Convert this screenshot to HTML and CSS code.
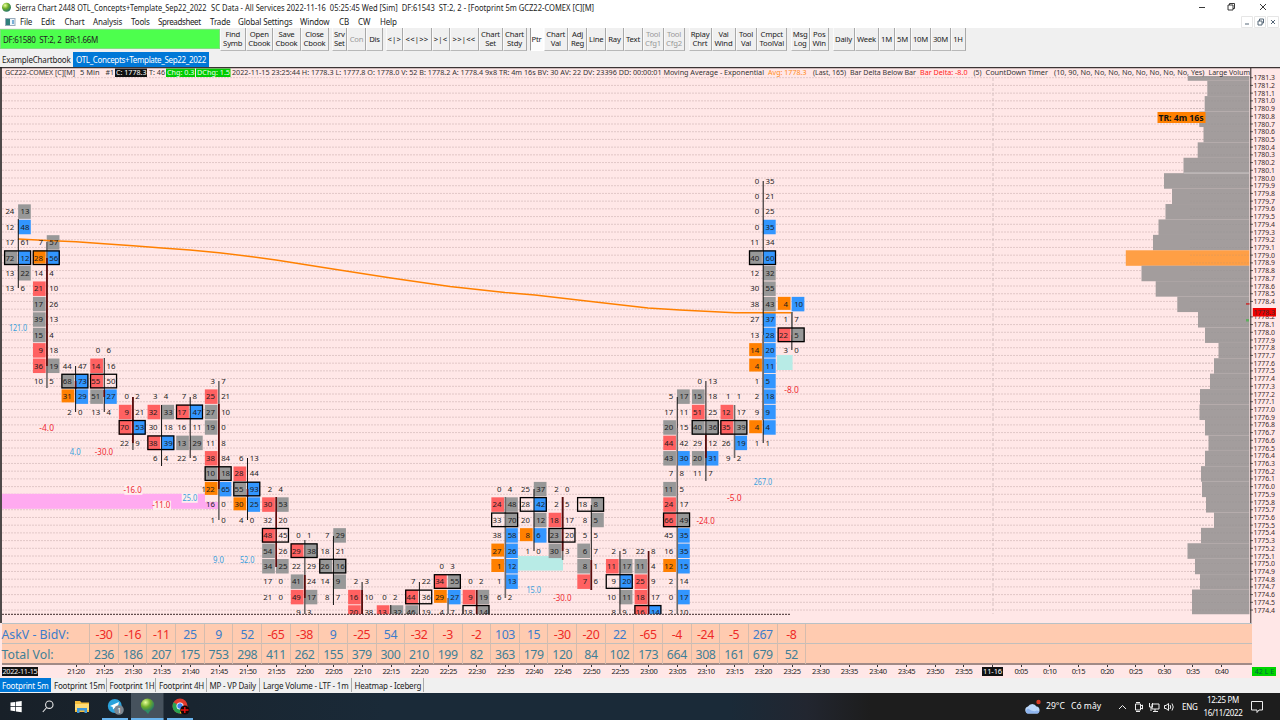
FILE: index.html
```html
<!DOCTYPE html>
<html lang="en">
<head>
<meta charset="utf-8">
<title>Sierra Chart</title>
<link rel="stylesheet" href="styles.css">
</head>
<body>
<div class="app">
  <header class="titlebar">
    <svg class="title-svg" width="620" height="15">
      <defs><radialGradient id="ball" cx=".35" cy=".3" r=".8"><stop offset="0" stop-color="#eaff9a"/><stop offset=".45" stop-color="#6fae2a"/><stop offset="1" stop-color="#176a72"/></radialGradient></defs>
      <circle cx="6.5" cy="7.2" r="4.5" fill="url(#ball)"/>
      <text x="15.500" y="10.500" textLength="191" lengthAdjust="spacingAndGlyphs">Sierra Chart 2448 OTL_Concepts+Template_Sep22_2022</text>
      <text x="211" y="10.500" textLength="383" lengthAdjust="spacingAndGlyphs">SC Data - All Services 2022-11-16&#160; 05:25:45 Wed [Sim]&#160; DF:61543&#160; ST:2, 2 - [Footprint 5m GCZ22-COMEX [C][M]</text>
    </svg>
    <svg class="winctl" width="80" height="15" fill="none" stroke="#222" stroke-width=".9"><path d="M5 7.500h6M34 5h5v5h-5zM35.500 5V3.500h5V8.500h-1.500M66 4l6 6M72 4l-6 6"/></svg>
  </header>
  <nav class="menubar">
    <svg class="menu-ico" width="11" height="8"><rect x=".5" y=".5" width="9.500" height="7" fill="#eef6fb" stroke="#9ab"/><rect x="1" y="1" width="4" height="6" fill="#2f7f7c"/><rect x="7" y="2" width="2" height="4" fill="#7ab0d8"/></svg>
    <span>File</span><span>Edit</span><span>Chart</span><span>Analysis</span><span>Tools</span><span class="tight">Spreadsheet</span><span>Trade</span><span>Global Settings</span><span>Window</span><span>CB</span><span>CW</span><span>Help</span>
    <svg class="mdictl" width="38" height="12" fill="none" stroke="#567" stroke-width="1"><path d="M.5.500h11v11H.500zM13.500.500h11v11h-11zM26.500.500h11v11h-11z" stroke="#e6e6e6"/><path d="M4 8h4M17 5h4v4h-4zM18.500 5V3h4v4h-1.500M30 4l4 4M34 4l-4 4"/></svg>
  </nav>
  <div class="toolbar">
    <div class="status">DF:61580&#160; ST:2, 2&#160; BR:1.66M</div>
    <div class="tb">Find<br>Symb</div><div class="tb">Open<br>Cbook</div><div class="tb">Save<br>Cbook</div><div class="tb">Close<br>Cbook</div><i></i>
    <div class="tb">Srv<br>Set</div><div class="tb off">Con</div><div class="tb">Dis</div><i></i>
    <div class="tb sym">&lt;|&gt;</div><div class="tb sym">&lt;&lt;|&gt;&gt;</div><div class="tb sym">&gt;|&lt;</div><div class="tb sym">&gt;&gt;|&lt;&lt;</div><div class="tb">Chart<br>Set</div><div class="tb">Chart<br>Stdy</div><i></i>
    <div class="tb on">Ptr</div><div class="tb">Chart<br>Val</div><div class="tb">Adj<br>Reg</div><div class="tb">Line</div><div class="tb">Ray</div><div class="tb">Text</div><div class="tb off">Tool<br>Cfg1</div><div class="tb off">Tool<br>Cfg2</div><i></i>
    <div class="tb">Rplay<br>Chrt</div><div class="tb">Val<br>Wind</div><div class="tb">Tool<br>Val</div><div class="tb">Cmpct<br>ToolVal</div><i></i>
    <div class="tb">Msg<br>Log</div><div class="tb">Pos<br>Win</div><i></i>
    <div class="tb">Daily</div><div class="tb">Week</div><div class="tb">1M</div><div class="tb">5M</div><div class="tb">10M</div><div class="tb">30M</div><div class="tb">1H</div>
  </div>
  <div class="books"><span class="book">ExampleChartbook</span><span class="book active">OTL_Concepts+Template_Sep22_2022</span></div>
  <main class="chart">
    <svg id="plot" class="plot" width="1280" height="556" viewBox="0 67 1280 556"></svg>
    <div class="stats">
      <div class="stat-row" id="delta"><span class="stat-label askv">AskV - BidV:</span></div>
      <div class="stat-row" id="total"><span class="stat-label vol">Total Vol:</span></div>
    </div>
    <div class="times" id="times"><span class="date-first">2022-11-15</span></div>
  </main>
  <div class="tabs"><span class="tab active">Footprint 5m</span><span class="tab">Footprint 15m</span><span class="tab">Footprint 1H</span><span class="tab">Footprint 4H</span><span class="tab">MP - VP Daily</span><span class="tab">Large Volume - LTF - 1m</span><span class="tab">Heatmap - Iceberg</span></div>
  <footer class="taskbar">
    <svg class="apps" width="200" height="27" viewBox="0 0 200 27">
      <rect x="131" width="32.500" height="27" fill="#46525d"/>
      <path d="M10.500 9.600l4.800-.7v4.300h-4.800zM16 8.800l5.700-.8v5.200H16zM10.500 14h4.800v4.300l-4.800-.7zM16 14h5.700v5.200l-5.700-.8z" fill="#fff"/>
      <g fill="none" stroke="#e8e8e8" stroke-width="1.100"><circle cx="49.300" cy="11.700" r="3.700"/><path d="M46.700 14.500L42.800 19"/></g>
      <path d="M75 8h5l1.500 1.500H89V19H75z" fill="#f4bd3c"/><path d="M75 11h14v6H75z" fill="#ffdc75"/><path d="M77 20v-5h10v5h-2.500v-2.500h-5V20z" fill="#3c98dc"/>
      <circle cx="114.800" cy="13" r="7" fill="#2ba3dc"/><path d="M110 13l9-4-2 8-2.500-2-1.500 1.500-.3-2.500z" fill="#fff"/><circle cx="119" cy="17" r="4.800" fill="#7c8790"/><text x="117.300" y="19.500" class="badge">1</text>
      <ellipse cx="147.500" cy="12" rx="6.700" ry="6.500" fill="url(#ball)"/><path d="M144.500 17h6l-2.500 4z" fill="#2f8c66"/>
      <circle cx="180" cy="13" r="7.500" fill="#e33b2e"/><path d="M180 13L173.500 9.300A7.500 7.500 0 0 0 180 20.500z" fill="#29a352"/><path d="M180 13h7.500a7.500 7.500 0 0 1-7.500 7.500z" fill="#fbc116"/><circle cx="180" cy="13" r="3.500" fill="#fff"/><circle cx="180" cy="13" r="2.700" fill="#3d80ee"/><circle cx="184.800" cy="17" r="4.600" fill="#160507"/><path d="M181 17h7.500M184.800 14v6" stroke="#e11" stroke-width="1.400"/>
      <path d="M102 26h26M131 26h32.500M167 26h26" stroke="#69b4ee" stroke-width="2"/>
    </svg>
    <div class="tray">
      <svg width="17" height="16" viewBox="0 0 17 16"><path d="M4 14.500a3.600 3.600 0 0 1 0-7 4.800 4.800 0 0 1 8.500 0 3.600 3.600 0 0 1 .5 7z" fill="#bcd8fa"/><path d="M3 14.500a3 3 0 0 1 1-5q5 4 9 2l2.500 1-1.500 2z" fill="#8fb5ee"/><circle cx="14.500" cy="3" r="2.200" fill="#d83b24"/></svg>
      <span class="temp">29°C</span><span class="sky">Có mây</span>
      <svg class="trayico" width="58" height="14" viewBox="0 0 58 14" fill="none" stroke="#eee" stroke-width="1"><path d="M1 9l3.500-3.500L8 9M17.500 4h5v6h-5zM18 2.500h4M18 11.500h4M22.500 6l2-1v4l-2-1M34 4h7v5h-7zM37 9v2M35 11.500h5M31.500 3v4h3v-4M33 7v4M46.500 5.500H48l2.500-2v7L48 8.500h-1.500zM52 5q1.500 2 0 4M54 3.500q2.500 3.500 0 7"/></svg>
      <span class="lang">ENG</span>
      <span class="clock">12:25 PM<br>16/11/2022</span>
      <svg class="note" width="13" height="14" viewBox="0 0 13 14" fill="none" stroke="#eee" stroke-width="1"><path d="M.500 1.500h11v8.500H8l-2 2.500V10H.500z"/></svg>
    </div>
  </footer>
</div>
<script src="chart.js"></script>
</body>
</html>
```
FILE: styles.css
```css
* { box-sizing: border-box; }
body { margin: 0; font: 8px/9px "Noto Sans", "Open Sans", sans-serif; color: #222; background: #fff; overflow: hidden; }
svg { display: block; flex: none; }
text { white-space: pre; fill: #222; font-size: 8px; }
.badge { font-size: 7px; fill: #fff; }
.app { width: 1280px; height: 720px; display: flex; flex-direction: column; overflow: hidden; }
.titlebar { height: 15px; display: flex; justify-content: space-between; background: #fff; }
.title-svg text { font-size: 8px; }
.winctl { margin-right: 6px; }
.menubar { height: 13px; padding-left: 4.5px; display: grid; align-items: center; background: #fff; white-space: nowrap; letter-spacing: -.16px;
  grid-template-columns: 15.5px 21px 23.5px 28.5px 38px 27px 52px 28px 62px 39px 19px 22px 1fr 38px; margin-right: 1px; }
.tight { letter-spacing: -.4px; }
.toolbar { height: 24px; background: #f0f0f0; display: grid; align-items: stretch; white-space: nowrap; letter-spacing: -.2px;
  grid-template-columns: 219.5px 26.5px 26.5px 28px 28px 3px 15.5px 19px 17px 3px 16.5px 29px 18px 29px 24px 24px 3px 14px 24.5px 19px 18.5px 18px 19px 21px 21px 4px 23px 24px 21px 30.5px 4px 18.5px 19.5px 3.5px 22px 24px 16px 16px 20px 20px 15px; }
.status { background: #4dff4d; margin: 1px 0 3px; border: 1px solid #7fe07f; display: flex; align-items: center; padding-left: 2px; letter-spacing: -.3px; }
.tb { border-right: 1px solid #a8a8a8; border-bottom: 1px solid #b8b8b8; border-left: 1px solid #fafafa; display: flex; align-items: center; justify-content: center; text-align: center; font-size: 7.7px; line-height: 8.7px; height: 23px; }
.tb.off { color: #999; }
.tb.on { background: #fcfcfc; border-color: #999 #fff #fff #999; }
.tb.sym { letter-spacing: .2px; }
.books { height: 15px; background: #f0f0f0; display: flex; align-items: stretch; }
.book { padding: 3px 2px 0; width: 73px; white-space: nowrap; letter-spacing: -.2px; }
.book.active { width: 136px; background: #0078d7; color: #fff; padding-left: 3px; letter-spacing: -.34px; }
.chart { background: #ffe7e7; height: 611px; display: flex; flex-direction: column; }
.plot .c { font-size: 7.8px; fill: #1d1d1d; }
.plot .d { font-size: 8px; }
.plot .h { font-size: 7.4px; }
.plot .p { font-size: 7.3px; fill: #3d2929; }
.stats { width: 1250px; margin-left: 1.500px; background: #ffcbb0; border-top: 1px solid #b8c1c6; border-bottom: 2px solid #a18a86; height: 42px; }
.stat-row { height: 20px; display: flex; align-items: center; font-size: 12.3px; letter-spacing: -.4px; line-height: 22px; border-bottom: 1px solid #c2bfbc; }
.stat-row + .stat-row { border-bottom: 0; }
.stat-label { width: 88.7px; border-right: 1px solid #d5bcae; font-size: 12.3px; height: 20px; letter-spacing: 0; }
.stat-cell { width: 28.65px; height: 20px; text-align: center; border-right: 1px solid #d5bcae; flex: none; }
.askv, .up { color: #3c7ccb; }
.vol { color: #3f7f97; }
.down { color: #ee2a26; }
.times { height: 13px; display: flex; padding-left: 1.500px; }
.date-first { width: 36px; height: 9px; margin: 2px 24.2px 0 0; background: #111; color: #eee; font-size: 7.3px; line-height: 9px; display: flex; justify-content: flex-end; letter-spacing: -.3px; white-space: nowrap; }
.time { width: 28.65px; flex: none; text-align: center; font-size: 7.5px; letter-spacing: -.38px; line-height: 9px; padding-top: 2px; background: linear-gradient(#333, #333) 50% 0/1px 2px no-repeat; }
.time b { font-weight: 400; background: #111; color: #fff; display: block; margin: 0 4px; letter-spacing: -.1px; }
.live { background: #00d400; color: #064; width: 24px; margin: 2px 0 0 16.5px; height: 9px; font-size: 7px; text-align: center; line-height: 9px; flex: none; }
.tabs { height: 15px; background: #f0f0f0; display: grid; grid-template-columns: 51px 55.5px 49.5px 50.5px 53.5px 91.5px 72px; white-space: nowrap; letter-spacing: -.2px; }
.tab { padding: 3px 0 0 3px; height: 14px; border-right: 1px solid #aaa; }
.tab.active { background: #0078d7; color: #fff; border: 0; padding-left: 2px; }
.taskbar { height: 27px; background: linear-gradient(90deg, #182028, #1a2a38 30%, #1a2a38 57%, #222630 63%, #1d1d1d 68%); display: flex; justify-content: space-between; color: #fff; }
.tray { width: 256px; display: flex; align-items: center; font-size: 8.6px; white-space: nowrap; }
.temp { margin-left: 5px; width: 25px; }
.sky { width: 47px; }
.lang { margin-left: 6px; width: 19px; font-size: 8px; letter-spacing: -.3px; }
.clock { width: 44px; text-align: center; font-size: 8px; line-height: 12.5px; letter-spacing: -.35px; }
.note { margin-left: 6px; }
```
FILE: chart.js
```js
const TICK = 7.715, ROW = 15.42, STEP = 28.65, X0 = 18.3, Y0 = 180.8;
const fills = { g: '#989898', r: '#ff6161', b: '#3296ff', o: '#ff8000' };
const bars = [
  [2, '24/13g 12/48b 17/61 *72g/12b 13/22g 13/6'],
  [4, '7/57g *28o/56b 14/4 21r/10 17g/26 39g/13 15g/4 9r/18 36r/19g 10/5'],
  [12, '44/47 *68g/73b 31o/29b 2/0'],
  [11, '0/6 14r/16 *55r/50 51g/27b 13/4'],
  [14, '0/2 9r/21 *70r/53b 22/9'],
  [14, '3/4 32r/33g 30/18 *38r/39b 6/4'],
  [14, '7/8 *17r/47b 16/11 13g/29g 22/5'],
  [13, '3/7 25r/21 27g/10 19g/0 11/8 38r/84 *10g/18g 122o/65b 16/0 1/0'],
  [18, '6/13 28r/44 *55g/93b 30o/25b 4/0'],
  [20, '2/4 30r/53g 32/20 *48r/45 54g/26 34g/25g 17/0 21/0'],
  [23, '0/1 *29r/38g 22/29 41g/24 49r/17g 9/3'],
  [23, '7/29g 18/21 *26g/16g 14/9g 8/7'],
  [26, '2/3 16r/10 20r/38'],
  [27, '0/2 13r/32g'],
  [26, '7/22 *44r/36 46g/19'],
  [25, '0/3 *34r/55g 29o/27b 4/7'],
  [26, '0/2 9r/19g *18/14g'],
  [20, '0/4 24r/48g *33/70g 38/58b 27o/26b 1o/12b 1/13b 6/2'],
  [20, '25/37g *28/42b 20/12g 8o/6b 1/0'],
  [20, '2/0 2/5 18r/17 *23g/20 30g/3'],
  [21, '*18/8g 8/5g 5/5 6g/7 8g/1 7r/6'],
  [24, '2/5 11r/17g *9/20b 10/11g 8/9'],
  [24, '22/8 11g/4 25r/9 18r/17 *16r/14b'],
  [14, '5/17g 17/11 20g/15 44r/42 43g/30b 7/8 11g/5 24r/17 *66r/49g 45/35b 16/35b 12o/15b 2/14 0/17b 2/10'],
  [13, '0/13 15g/18 51r/25 *40g/36g 29/12 20g/31b 11/7'],
  [14, '1/1 12r/17 *35r/39g 26/19b 9/2'],
  [0, '0/35 0/21 0/25 0/35b 11/34 *40g/60b 12/32g 30/55g 38/43g 27/37b 13/28b 14o/20b 4o/11b 1/5b 2/18b 9/9b 4o/4b 1/1'],
  [8, '4o/10b 1/7 *22r/5g 3/0']
];
// Wicks and bodies: bar, top, bottom, colour key
const sticks = [
  [0, 219, 288, 'k'], [1, 242, 388, 'w'], [1, 258, 366, 'm'], [2, 366, 412, 'k'], [2, 381, 389, 'm'],
  [3, 358, 412, 'k'], [3, 390, 397, 'm'], [4, 397, 450, 'w'], [4, 397, 443, 'm'], [5, 405, 466, 'k'],
  [6, 397, 458, 'k'], [7, 381, 520, 'w'], [7, 404, 489, 'm'], [8, 458, 520, 'k'], [8, 489, 497, 'm'],
  [9, 497, 567, 'm'], [10, 540, 614, 'w'], [10, 575, 598, 'm'], [11, 536, 605, 'k'],
  [12, 582, 614, 'k'], [12, 590, 614, 'm'], [13, 605, 614, 'k'], [14, 582, 614, 'k'], [15, 598, 614, 'w'],
  [16, 590, 614, 'm'], [17, 497, 598, 'w'], [18, 489, 551, 'k'], [19, 497, 560, 'w'], [19, 497, 551, 'm'],
  [20, 505, 590, 'k'], [20, 560, 590, 'm'], [21, 551, 614, 'k'], [22, 551, 614, 'm'], [23, 397, 428, 'k'], [23, 428, 614, 'w'],
  [24, 381, 481, 'k'], [24, 435, 458, 'm'], [25, 405, 458, 'w'], [26, 181, 443, 'k'], [26, 335, 420, 'w'], [27, 312, 350, 'k'], [27, 312, 335, 'w']
];
const pens = { k: ['#111', 1], w: ['#6d6868', 1.6], m: ['#5a0a0a', 1.7] };
const marks = [[0,328,'121.0'],[1,428.5,'-4.0'],[2,452,'4.0'],[3,452,'-30.0'],[4,490,'-16.0'],[5,505.5,'-11.0'],[6,498,'25.0'],[7,560,'9.0'],[8,560,'52.0'],
  [18,590,'15.0'],[19,598,'-30.0'],[24,521,'-24.0'],[25,498,'-5.0'],[26,482.5,'267.0'],[27,390,'-8.0']];
const profile = [1187.7,1207.3,1204.7,1199.3,1203.5,1197.7,1183.5,1164,1172,1165.5,1158.500,1153,1125.8,1141.5,1155.7,1177.3,1198,1205,1218.5,1214,1210,1200,1199.5,1205,1208.5,1205,1201,1202,1206,1214,1201,1187.5,1195,1200,1192,1192];
const wx = i => X0 + STEP * i;
let out = '';
const rect = (x, y, w, h, f, more = '') => out += `<rect x="${x}" y="${y}" width="${w}" height="${h}" fill="${f}" ${more}/>`;
const line = (x1, y1, x2, y2, s, w, more = '') => out += `<line x1="${x1}" y1="${y1}" x2="${x2}" y2="${y2}" stroke="${s}" stroke-width="${w}" ${more}/>`;
const text = (x, y, t, cls, more = '') => out += `<text class="${cls}" x="${x}" y="${y}" ${more}>${t}</text>`;
const fit = (x, x2, t, color = '#333') => text(x, 75.4, t, 'h', `textLength="${x2 - x}" lengthAdjust="spacingAndGlyphs" style="fill:${color}"`);

out += '<defs><clipPath id="area"><rect x="0" y="76" width="1250" height="538.300"/></clipPath></defs>';
for (let k = 0; k < 70; k++) line(2, 77.7 + k * TICK, 1250, 77.7 + k * TICK, '#d9bfbf', .8, 'stroke-dasharray="2 1"');
line(993, 78, 993, 614, '#cdb9b9', .8, 'stroke-dasharray="3 2"');
out += '<g clip-path="url(#area)">';
rect(2, 493.8, 203, 15, '#ffaaf0');
rect(205, 502, 13, 7, '#ffaaf0');
rect(518, 556, 45, 14.6, '#b8ebe6');
rect(777, 355, 15.6, 15, '#b8ebe6');
profile.forEach((x, i) => {
  const y = 65.25 + i * ROW;
  rect(x, y, 1249.4 - x, ROW + .1, i === 12 ? '#ff9f45' : '#a39d9d');
});
for (let k = 0; k < 70; k++) line(1190, 77.7 + k * TICK, 1249, 77.7 + k * TICK, '#8f8888', .5, 'opacity=".35" stroke-dasharray="2 1"');
line(1184, 173, 1249.400, 173, '#c9c4c4', 1);
const later = [];
bars.forEach(([r0, src], i) => {
  const x = wx(i);
  src.split(' ').forEach((cell, k) => {
    const y = Y0 + (r0 + k) * ROW, [l, r] = cell.replace('*', '').split('/');
    const lf = fills[l.slice(-1)], rf = fills[r.slice(-1)];
    if (lf) rect(x - 14, y - 7.3, 12.7, l.endsWith('o') ? 13 : 14.5, lf);
    if (rf) rect(x - .2, y - 7.3, 12.7, 14.5, rf);
    later.push([x, y, parseInt(l), parseInt(r), cell[0] === '*']);
  });
});
out += '<polyline points="18,239 47,240.500 76,241.700 104,243.700 133,245.700 162,248 190,250 219,252.700 248,256.200 276,260 333,269 391,278 450,286.500 505,292.500 535,295 591,301.500 648,308 680,310 720,312 735,312.700 792,312.700" fill="none" stroke="#ff8000" stroke-width="1.400"/>';
sticks.forEach(([i, a, b, p]) => line(wx(i), a, wx(i), b, ...pens[p]));
later.forEach(([x, y, l, r, box]) => {
  text(x - 4, y + 2.7, l, 'c', 'text-anchor="end"');
  text(x + 2.300, y + 2.7, r, 'c');
  if (box) rect(x - 13.7, y - 7, 26, 13.6, 'none', 'stroke="#000" stroke-width="1.300"');
});
out += '</g>';
marks.forEach(([i, y, t]) => {
  if (i === 4 || i === 5 || i === 6) rect(wx(i) - 8.5, y - 4.800, i === 6 ? 16 : 18, 9.6, '#ffeeee');
  text(wx(i) - .3, y + 2.8, t, 'd', `text-anchor="middle" textLength="${t.length * 3.65}" lengthAdjust="spacingAndGlyphs" style="fill:${t[0] === '-' ? '#ee2a32' : '#3a9fdc'}"`);
});
line(2, 614.3, 791, 614.3, '#3c2a2a', 1, 'stroke-dasharray="2 1"');
rect(1157.5, 112, 48, 11, '#ff8000');
text(1158.5, 120.7, 'TR: 4m 16s', 'd', 'font-weight="bold" textLength="45" lengthAdjust="spacingAndGlyphs" style="fill:#111"');

rect(115, 68.500, 32, 8.500, '#111');
rect(166, 68.500, 29, 8.500, '#0c0');
rect(196, 68.500, 34.500, 8.500, '#0c0');
fit(5, 75, 'GCZ22-COMEX [C][M]'); fit(80, 99.500, '5 Min'); fit(105.500, 114, '#1');
fit(116, 146.500, 'C: 1778.3', '#fff'); fit(149, 165, 'T: 46'); fit(167, 194.500, 'Chg: 0.3', '#efe'); fit(197, 230, 'DChg: 1.5', '#efe');
fit(232, 764, '2022-11-15 23:25:44 H: 1778.3 L: 1777.8 O: 1778.0 V: 52 B: 1778.2 A: 1778.4 9x8 TR: 4m 16s BV: 30 AV: 22 DV: 23396 DD: 00:00:01 Moving Average - Exponential');
fit(768, 806.500, 'Avg: 1778.3', '#ff8c1a'); fit(813, 846, '(Last, 165)'); fit(850, 916, 'Bar Delta Below Bar');
fit(920, 967.500, 'Bar Delta: -8.0', '#f22'); fit(973.500, 981.500, '(5)'); fit(985.500, 1048, 'CountDown Timer');
fit(1054, 1204.500, '(10, 90, No, No, No, No, No, No, No, No, Yes)'); fit(1208.500, 1250, 'Large Volum');

rect(1251, 68, 29, 556, '#ffe7e7');
line(0, 67.6, 1280, 67.6, '#3b3434', 1.2);
line(1, 67, 1, 623, '#222', 1.600);
line(1250.8, 68, 1250.8, 623, '#2b2222', 1);
const price = k => {
  const y = 77.7 + k * TICK;
  line(1250, y, 1253, y, '#333', .8);
  text(1253.500, y + 2.6, ((17813 - k) / 10).toFixed(1), 'p', 'textLength="21.500" lengthAdjust="spacingAndGlyphs"');
};
for (let k = 0; k < 70; k++) if (k !== 30) price(k);
// Last traded price sits over its neighbours on the scale
rect(1252.800, 308, 23.200, 8.500, '#f00000');
text(1253.500, 315, '1778.3', 'p', 'textLength="21.500" lengthAdjust="spacingAndGlyphs"');
rect(1246, 303, 3.500, 1.800, '#c33d3d');
rect(1246, 319, 3, 2.500, '#5eae5e');
document.getElementById('plot').innerHTML = out;

const delta = [-30,-16,-11,25,9,52,-65,-38,9,-25,54,-32,-3,-2,103,15,-30,-20,22,-65,-4,-24,-5,267,-8];
const total = [236,186,207,175,753,298,411,262,155,379,300,210,199,82,363,179,120,84,102,173,664,308,161,679,52];
const add = (id, html) => document.getElementById(id).insertAdjacentHTML('beforeend', html);
delta.forEach(v => add('delta', `<span class="stat-cell ${v < 0 ? 'down' : 'up'}">${v}</span>`));
total.forEach(v => add('total', `<span class="stat-cell vol">${v}</span>`));
for (let i = 0; i <= 40; i++) {
  const m = 21 * 60 + 20 + i * 5, h = Math.floor(m / 60) % 24;
  add('times', `<span class="time">${m === 1440 ? '<b>11-16</b>' : h + ':' + String(m % 60).padStart(2, '0')}</span>`);
}
add('times', '<span class="live">42 L E</span>');
```
